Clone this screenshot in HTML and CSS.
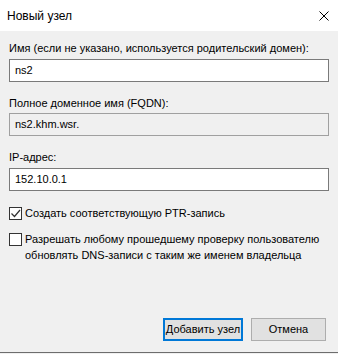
FILE: index.html
```html
<!DOCTYPE html>
<html lang="ru">
<head>
  <meta charset="UTF-8" />
  <title>Новый узел</title>
  <link rel="stylesheet" href="styles.css">
</head>
<body>

  <div class="dialog">
    <div class="titlebar">
      <span class="title">Новый узел</span>
      <span class="close">
        <svg viewBox="0 0 10 10" width="10" height="10">
          <path d="M0.5 0.5 L9.5 9.5 M9.5 0.5 L0.5 9.5" />
        </svg>
      </span>
    </div>

    <div class="content">
      <div class="label">Имя (если не указано, используется родительский домен):</div>
      <div class="field">ns2</div>

      <div class="label label-fqdn">Полное доменное имя (FQDN):</div>
      <div class="field field-readonly">ns2.khm.wsr.</div>

      <div class="label label-ip">IP-адрес:</div>
      <div class="field">152.10.0.1</div>

      <div class="check check-first">
        <span class="box">
          <svg viewBox="0 0 11 11" width="11" height="11">
            <path d="M1.5 5.5 L4.5 8.5 L10 2" />
          </svg>
        </span>
        <span class="check-text">Создать соответствующую PTR-запись</span>
      </div>

      <div class="check">
        <span class="box"></span>
        <span class="check-text">Разрешать любому прошедшему проверку пользователю обновлять DNS-записи с таким же именем владельца</span>
      </div>

      <div class="buttons">
        <div class="btn btn-default">Добавить узел</div>
        <div class="btn">Отмена</div>
      </div>
    </div>
  </div>

</body>
</html>
```

FILE: styles.css
```css
body {
  margin: 0;
  background-color: #f0f0f0;
  font-family: "Liberation Sans", Arial, sans-serif;
  font-size: 11px;
  color: #000;
}

.dialog {
  width: 338px;
  height: 352px;
  display: flex;
  flex-direction: column;
  background-color: #f0f0f0;
  border-bottom: 1px solid #6d6d6d;
}

.titlebar {
  height: 31px;
  background-color: #fff;
  display: flex;
  align-items: center;
  justify-content: space-between;
  padding: 0 9px 0 7px;
}

.title {
  font-size: 12px;
}

.close {
  display: flex;
  width: 10px;
  height: 10px;
}

.close path {
  stroke: #000;
  stroke-width: 1;
  fill: none;
}

.content {
  flex: 1;
  display: flex;
  flex-direction: column;
  padding: 10px 9px 11px 9px;
}

.label {
  line-height: 15px;
  margin-bottom: 3px;
  color: #000;
}

.label-fqdn {
  margin-top: 14px;
  margin-bottom: 2px;
}

.label-ip {
  margin-top: 14px;
}

.field {
  height: 21px;
  border: 1px solid #7a7a7a;
  background-color: #fff;
  font-size: 11px;
  line-height: 21px;
  padding-left: 5px;
}

.field-readonly {
  background-color: #f0f0f0;
  border-color: #a0a0a0;
}

.check {
  display: flex;
  align-items: flex-start;
  margin-top: 10px;
  line-height: 16px;
}

.check-first {
  margin-top: 14px;
}

.box {
  width: 11px;
  height: 11px;
  border: 1px solid #333;
  background-color: #fff;
  margin: 2px 3px 0 0;
  flex-shrink: 0;
  display: flex;
}

.box path {
  stroke: #333;
  stroke-width: 1.2;
  fill: none;
}

.check-text {
  padding-right: 4px;
}

.buttons {
  margin-top: auto;
  display: flex;
  justify-content: flex-end;
  gap: 8px;
  padding-right: 3px;
}

.btn {
  width: 73px;
  height: 21px;
  border: 1px solid #adadad;
  background-color: #e1e1e1;
  text-align: center;
  line-height: 21px;
  white-space: nowrap;
}

.btn-default {
  width: 76px;
  height: 19px;
  border: 2px solid #0078d7;
  line-height: 19px;
}
```
